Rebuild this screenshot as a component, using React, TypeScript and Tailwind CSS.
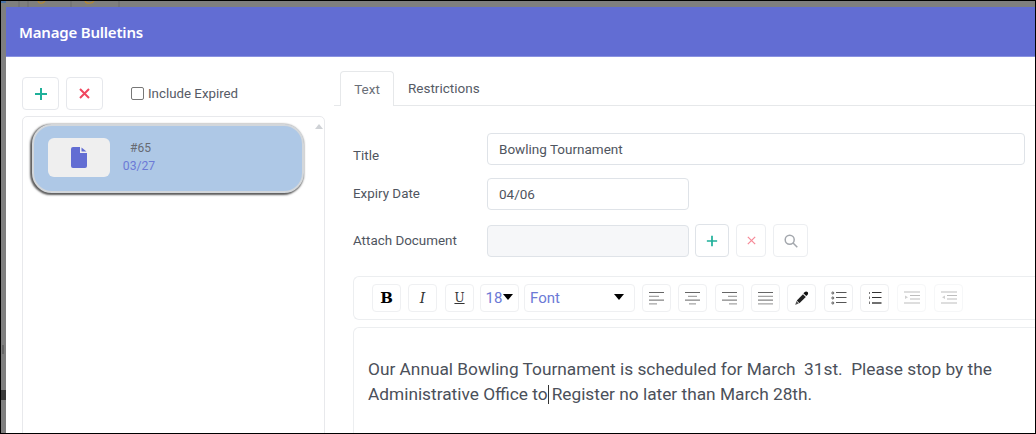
import React from "react";

const roboto = { fontFamily: "Roboto, sans-serif" };
const slab = { fontFamily: "'DejaVu Serif', serif" };

function Cell({ w = "w-[29px]", ml = "ml-[7px]", children, faded }: { w?: string; ml?: string; children?: React.ReactNode; faded?: boolean }) {
  return (
    <div className={`${w} ${ml} h-[28px] shrink-0 rounded-[4px] border flex items-center justify-center ${faded ? "border-[#f6f7f8]" : "border-[#eff0f2]"}`}>
      {children}
    </div>
  );
}

function Lines({ rows }: { rows: [number, number][] }) {
  return (
    <svg width="16" height="15" viewBox="0 0 16 15">
      {rows.map(([x, w], i) => (
        <rect key={i} x={x} y={i * 3.8 + 1} width={w} height="1" fill={i % 2 ? "#8e8e8e" : "#666"} />
      ))}
    </svg>
  );
}

function Plus({ size = 14, sw = 2 }: { size?: number; sw?: number }) {
  return (
    <svg width={size} height={size} viewBox="0 0 14 14">
      <path d="M7 1v12M1 7h12" stroke="#1fb09a" strokeWidth={sw} fill="none" />
    </svg>
  );
}

function Cross({ size = 11, color = "#f0475f", sw = 2 }: { size?: number; color?: string; sw?: number }) {
  return (
    <svg width={size} height={size} viewBox="0 0 11 11">
      <path d="M1 1l9 9M10 1l-9 9" stroke={color} strokeWidth={sw} fill="none" />
    </svg>
  );
}

function Field({ label, children, mt, labelClass = "" }: { label: string; children: React.ReactNode; mt: string; labelClass?: string }) {
  return (
    <div className={`flex items-center ${mt}`}>
      <div className={`w-[134px] shrink-0 text-[13.4px] text-[#4f5560] ${labelClass}`}>{label}</div>
      {children}
    </div>
  );
}

export default function App() {
  return (
    <div style={roboto} className="relative w-[1036px] h-[434px] overflow-hidden bg-[#7f7f7f] border-t border-l border-r border-b border-black pl-[5px] pt-[6px]">
      <svg className="absolute left-0 top-0" width="130" height="6" viewBox="0 0 130 6" fill="none">
        <path d="M18 0v6M27 0v6M70 0v6M118 0v6" stroke="#6f6f6f" />
        <path d="M37 0c1 3 5 3 7 0" stroke="#b98a2e" strokeWidth="1.2" />
        <path d="M84 0c1 3 7 3 9 0" stroke="#b98a2e" strokeWidth="1.2" />
        <rect x="0" y="0" width="5" height="2" fill="#4a74a8" />
      </svg>
      <svg className="absolute left-0 top-[340px]" width="5" height="62" viewBox="0 0 5 62">
        <rect x="1" y="4" width="2" height="9" fill="#666" />
        <rect x="0" y="49" width="5" height="10" fill="#3a3a3a" />
      </svg>
      <div className="h-[440px] bg-white">
        <div className="h-[50px] bg-[#626dd3] border-b border-[#8a93e0] flex items-center pl-[13px] pt-[2px] text-[15px] text-white">
          <span style={{ fontFamily: "'Noto Sans', sans-serif" }} className="font-semibold tracking-[-0.2px]">Manage Bulletins</span>
        </div>
        <div className="flex">
          <div className="w-[328px] shrink-0 pl-[16px] pt-[20px]">
            <div className="flex items-center h-[33px]">
              <div className="w-[37px] h-[33px] rounded-[4px] border border-[#e6e8ec] flex items-center justify-center"><Plus /></div>
              <div className="w-[37px] h-[33px] ml-[7px] rounded-[4px] border border-[#e6e8ec] flex items-center justify-center"><Cross /></div>
              <div className="ml-[28px] w-[13px] h-[13px] rounded-[2px] border border-[#777]" />
              <span className="ml-[4px] text-[13.3px] text-[#565b66]">Include Expired</span>
            </div>
            <div className="relative mt-[6px] w-[303px] h-[330px] rounded-t-[5px] border border-[#e8e9ec] pl-[9px] pt-[7px]">
              <div className="absolute right-[1px] top-[7px] w-0 h-0 border-x-[4px] border-x-transparent border-b-[5px] border-b-[#cfd2d6]" />
              <div className="w-[272px] h-[69px] rounded-[20px] bg-[#aec8e6] border-2 border-[#d3d7db] shadow-[-1px_1px_2px_1px_#5c5c5c] flex items-center pl-[14px]">
                <div className="w-[62px] h-[39px] mb-[2px] rounded-[6px] bg-[#efefef] flex items-center justify-center">
                  <svg width="16" height="21" viewBox="0 0 16 21">
                    <path d="M2 0h7v6h7v13a2 2 0 0 1-2 2H2a2 2 0 0 1-2-2V2a2 2 0 0 1 2-2zM10.5 0.5L15.5 4.5h-5z" fill="#626dd3" />
                  </svg>
                </div>
                <div className="ml-[13px] mb-[3px] flex flex-col items-center w-[32px]">
                  <span className="text-[12px] leading-[18px] text-[#666a72] ml-[3px]">#65</span>
                  <span className="text-[12.2px] leading-[18px] text-[#6c7ad6]">03/27</span>
                </div>
              </div>
            </div>
          </div>
          <div className="flex-1 min-w-0 pt-[14px]">
            <div className="flex h-[35px] pl-[6px] border-b border-[#e6e8ea] text-[13.5px]">
              <div className="w-[54px] h-[35px] rounded-t-[4px] border border-b-0 border-[#e6e8ea] bg-white flex items-center justify-center text-[#6a6f78]">Text</div>
              <div className="ml-[14px] flex items-center text-[#565b66]">Restrictions</div>
            </div>
            <div className="pl-[19px]">
              <Field label="Title" mt="mt-[27px]" labelClass="pt-[13px] -mb-[1px]">
                <div className="w-[538px] h-[32px] rounded-[4px] border border-[#dfe3e8] flex items-center pl-[11px] text-[13.5px] text-[#4f5560]">Bowling Tournament</div>
              </Field>
              <Field label="Expiry Date" mt="mt-[13px]">
                <div className="w-[202px] h-[32px] rounded-[4px] border border-[#dfe3e8] flex items-center pl-[11px] text-[13.5px] text-[#4f5560]">04/06</div>
              </Field>
              <Field label="Attach Document" mt="mt-[14px]">
                <div className="w-[202px] h-[32px] rounded-[4px] border border-[#dfe3e8] bg-[#f6f7f9]" />
                <div className="ml-[6px] w-[34px] h-[33px] rounded-[4px] border border-[#dfe3e8] flex items-center justify-center"><Plus size={12} /></div>
                <div className="ml-[7px] w-[30px] h-[33px] rounded-[4px] border border-[#eceef1] flex items-center justify-center"><Cross size={9} color="#f68a98" sw={1.5} /></div>
                <div className="ml-[7px] w-[35px] h-[33px] rounded-[4px] border border-[#eceef1] flex items-center justify-center">
                  <svg width="14" height="14" viewBox="0 0 14 14" fill="none" stroke="#a3a7ad" strokeWidth="1.5">
                    <circle cx="5.7" cy="5.7" r="4.5" /><path d="M9 9l4.3 4.3" />
                  </svg>
                </div>
              </Field>
              <div className="mt-[19px] h-[44px] -mr-[8px] rounded-l-[6px] border border-r-0 border-[#eceef0] flex items-center pl-[18px]">
                <Cell ml="ml-0"><span style={slab} className="text-[15px] font-bold text-black">B</span></Cell>
                <Cell><span style={slab} className="text-[14px] italic text-[#333]">I</span></Cell>
                <Cell ml="ml-[8px]"><span style={slab} className="text-[12px] underline text-[#333]">U</span></Cell>
                <Cell w="w-[39px]" ml="ml-[6px]">
                  <span className="text-[15px] text-[#6c7ad6]">18</span>
                  <span className="ml-[1px] mb-[2px] w-0 h-0 border-x-[5px] border-x-transparent border-t-[6px] border-t-black" />
                </Cell>
                <div className="w-[111px] ml-[5px] h-[28px] rounded-[4px] border border-[#eff0f2] flex items-center justify-between pl-[5px] pr-[10px]">
                  <span className="text-[15px] text-[#6c7ad6]">Font</span>
                  <span className="mb-[2px] w-0 h-0 border-x-[5px] border-x-transparent border-t-[6px] border-t-black" />
                </div>
                <Cell><Lines rows={[[0, 15], [0, 10], [0, 15], [0, 8]]} /></Cell>
                <Cell><Lines rows={[[0, 15], [3, 9], [0, 15], [4, 7]]} /></Cell>
                <Cell ml="ml-[8px]"><Lines rows={[[0, 15], [6, 9], [0, 15], [7, 8]]} /></Cell>
                <Cell><Lines rows={[[0, 15], [0, 15], [0, 15], [0, 15]]} /></Cell>
                <Cell>
                  <svg width="15" height="15" viewBox="0 0 15 15">
                    <path d="M10.5 1.2c.9-1 2.3-1 3.1-.2.8.8.7 2.1-.2 3l-1.2 1.1-2.8-2.8z" fill="#111" />
                    <path d="M9 3.3l2.8 2.8-6.4 6.2-2.6-2.8z" fill="#222" />
                    <path d="M2.4 10l2.4 2.6-2.7 1-.9.3z" fill="#555" />
                  </svg>
                </Cell>
                <Cell ml="ml-[8px]">
                  <svg width="16" height="14" viewBox="0 0 16 14" fill="none" stroke="#555">
                    <circle cx="1.8" cy="2" r="1" /><circle cx="1.8" cy="7" r="1" /><circle cx="1.8" cy="12" r="1" />
                    <path d="M5 1.5h10.5M5 6.5h10.5M5 11.5h10.5" />
                  </svg>
                </Cell>
                <Cell>
                  <svg width="14" height="14" viewBox="0 0 14 14" fill="none" stroke="#333">
                    <path d="M1.5 1v2M1.5 5.5v2.5M1.5 10.5v2.5" strokeWidth="1" stroke="#777" />
                    <path d="M4 1.5h9.5M4 6.5h9.5" /><path d="M4 12h9.5" strokeWidth="1.4" />
                  </svg>
                </Cell>
                <Cell ml="ml-[8px]" faded>
                  <svg width="16" height="14" viewBox="0 0 16 14" stroke="#bdbdbd" fill="none">
                    <path d="M0 1h16M6 4.5h10M6 8h10M0 12h16" strokeWidth="1.1" /><path d="M1 4.5l3 1.8-3 1.8z" fill="#d0d0d0" stroke="none" />
                  </svg>
                </Cell>
                <Cell ml="ml-[8px]" faded>
                  <svg width="16" height="14" viewBox="0 0 16 14" stroke="#bdbdbd" fill="none">
                    <path d="M0 1h16M6 4.5h10M6 8h10M0 12h16" strokeWidth="1.1" /><path d="M4 4.5l-3 1.8 3 1.8z" fill="#d0d0d0" stroke="none" />
                  </svg>
                </Cell>
              </div>
              <div className="mt-[7px] h-[120px] -mr-[8px] rounded-tl-[6px] border-l border-t border-[#eceef0] pl-[14px] pt-[29px] text-[17.3px] leading-[25px] text-[#4b505a] whitespace-pre">
                {"Our Annual Bowling Tournament is scheduled for March  31st.  Please stop by the\nAdministrative Office to"}
                <span className="inline-block w-px h-[19px] mr-[3px] bg-[#333] align-[-4px]" />
                {"Register no later than March 28th."}
              </div>
            </div>
          </div>
        </div>
      </div>
    </div>
  );
}
